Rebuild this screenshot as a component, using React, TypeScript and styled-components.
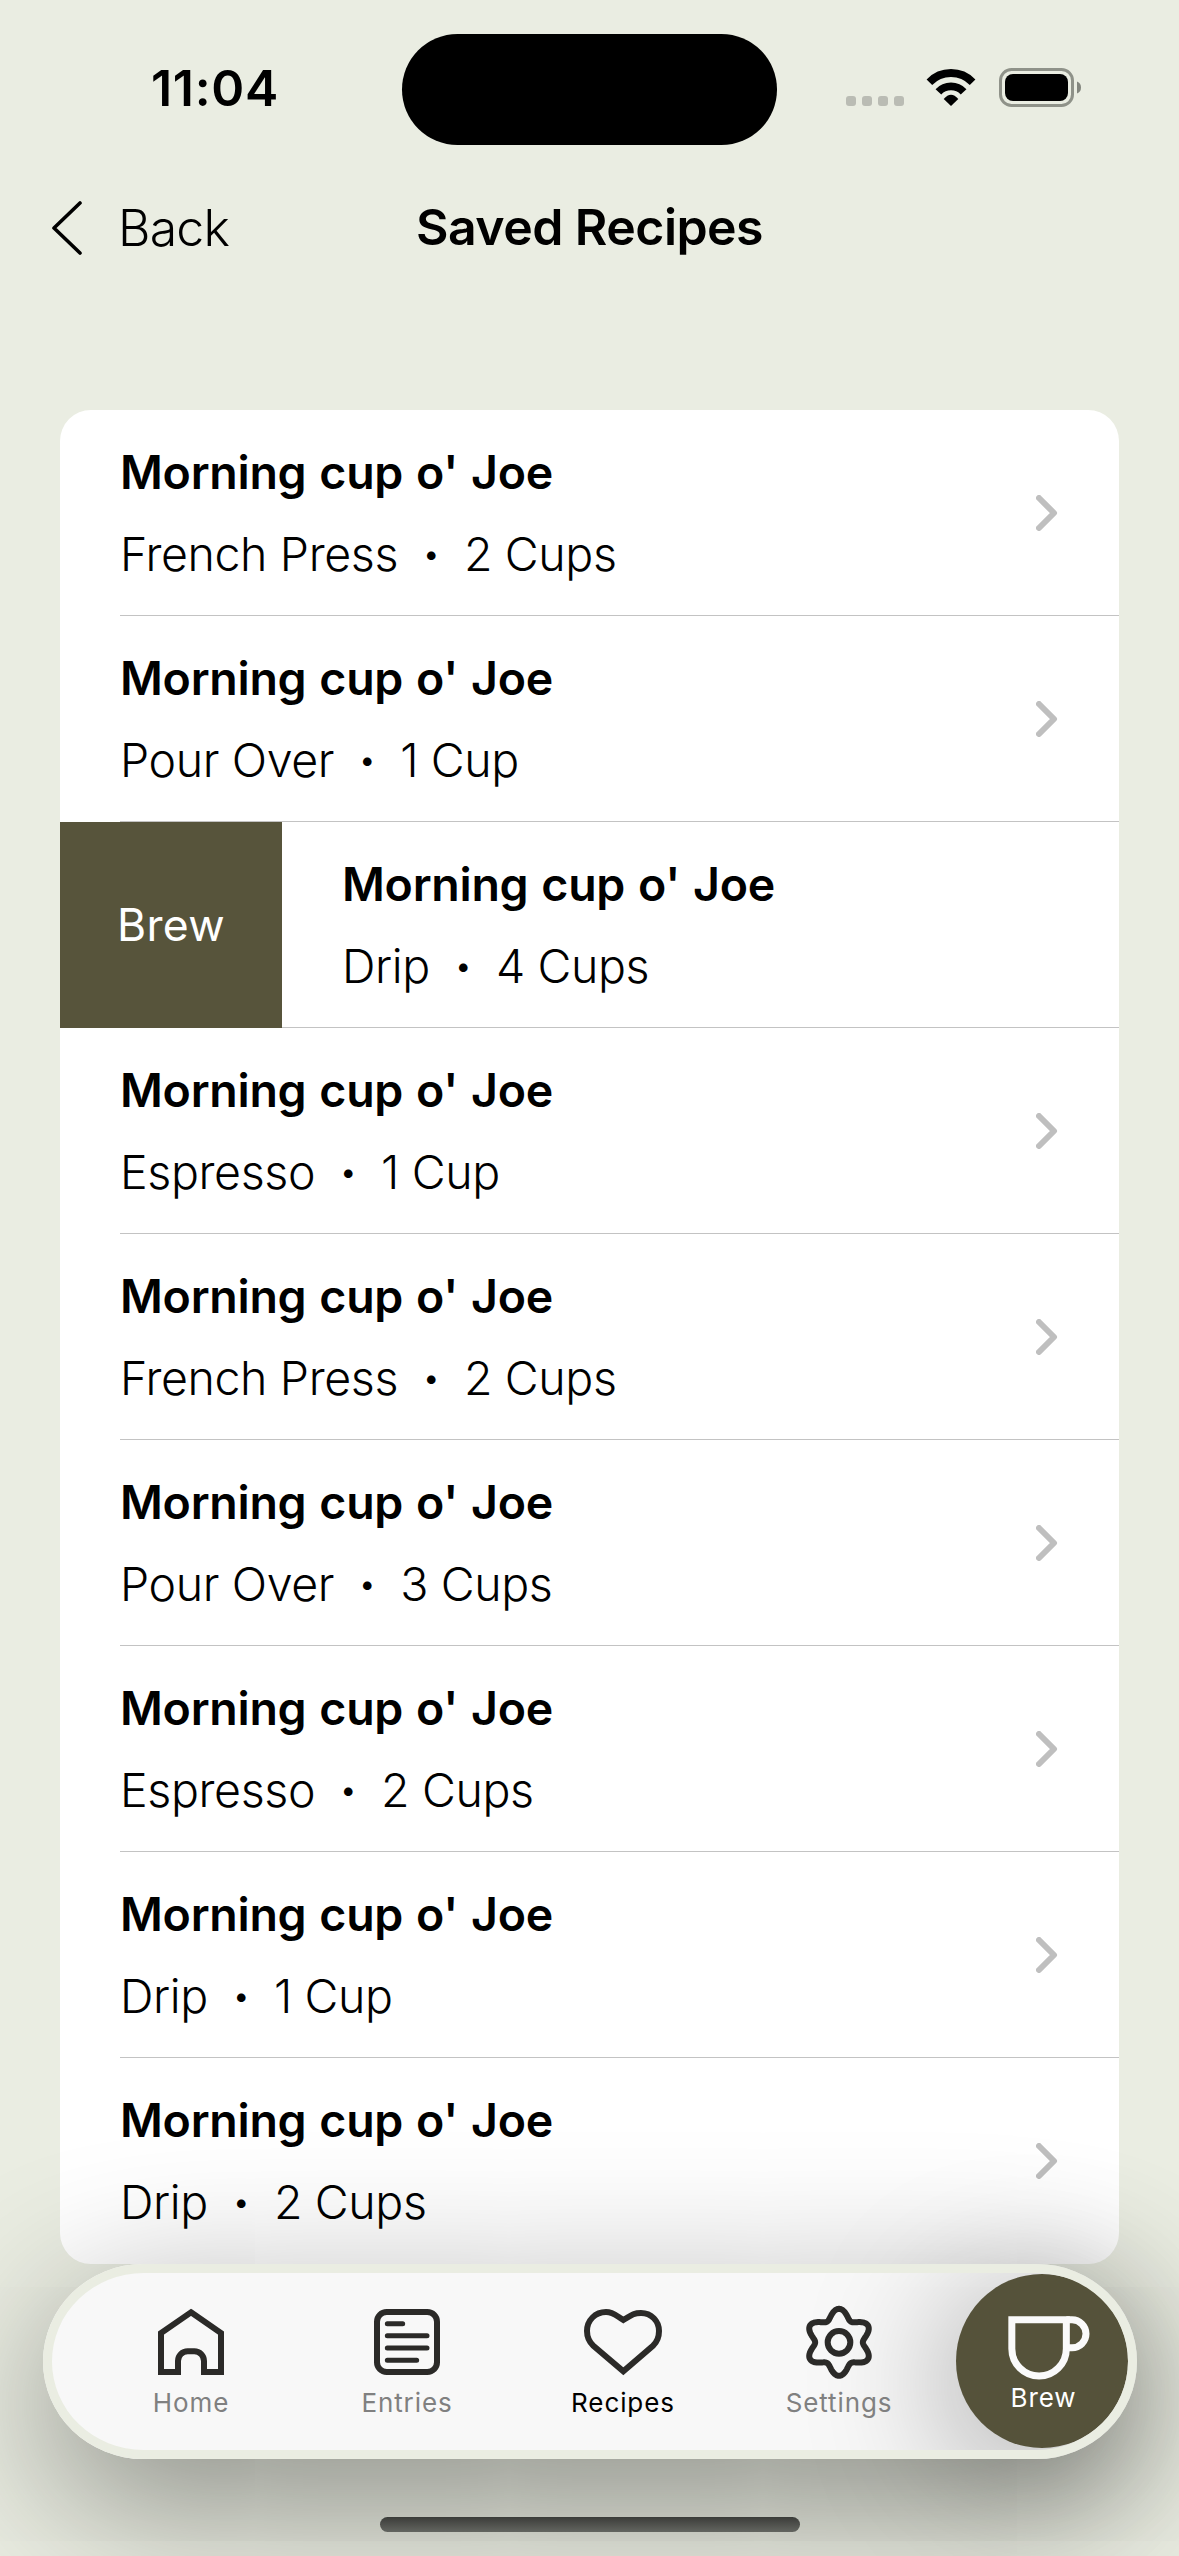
import React from "react";
import styled, { createGlobalStyle } from "styled-components";

const GlobalStyle = createGlobalStyle`
  * { box-sizing: border-box; }
  html, body { margin: 0; padding: 0; }
  body { background: #eaede2; font-family: Inter, "Liberation Sans", sans-serif; color: #000; }
`;

const Screen = styled.main`
  width: 1179px;
  height: 2556px;
  overflow: hidden;
  background: #eaede2;
  display: flex;
  flex-direction: column;
`;

const StatusBar = styled.header`
  height: 178px;
  flex: none;
  display: grid;
  grid-template-columns: 402px 375px 1fr;
  align-items: start;
`;

const Clock = styled.time`
  margin-top: 60px;
  padding-left: 28px;
  text-align: center;
  font-size: 50px;
  line-height: 56px;
  font-weight: 600;
  letter-spacing: 0.7px;
`;

const Island = styled.div`
  margin-top: 33.5px;
  height: 111px;
  border-radius: 56px;
  background: #000;
`;

const StatusIcons = styled.div`
  display: flex;
  align-items: flex-end;
  padding-left: 69px;
  margin-top: 68px;
  height: 39px;
`;

const CellDots = styled.div`
  display: flex;
  gap: 6px;
  padding-bottom: 1px;
  margin-right: 22px;
`;

const CellDot = styled.i`
  width: 10px;
  height: 10px;
  border-radius: 3px;
  background: #babcb4;
`;

const StatusGlyph = styled.svg<{ $gap?: number }>`
  display: block;
  flex: none;
  margin-right: ${(p) => p.$gap ?? 0}px;
`;

const NavBar = styled.nav`
  height: 100px;
  flex: none;
  display: grid;
  grid-template-columns: 360px 459px 360px;
  align-items: center;
`;

const BackButton = styled.a`
  display: flex;
  align-items: center;
  padding-left: 51px;
  gap: 35px;
  font-size: 50px;
  line-height: 60px;
  font-weight: 300;
  letter-spacing: -0.8px;
`;

const Title = styled.h1`
  margin: 0 0 2px;
  text-align: center;
  font-size: 50px;
  line-height: 60px;
  font-weight: 600;
  letter-spacing: -0.55px;
`;

const RecipeList = styled.ul`
  list-style: none;
  margin: 132px 60px 0;
  padding: 0;
  flex: none;
  background: #fff;
  border-radius: 31px;
  overflow: hidden;
`;

const RecipeRow = styled.li`
  height: 206px;
  display: flex;
  overflow: hidden;
`;

const SwipeAction = styled.button`
  width: 222px;
  flex: none;
  border: 0;
  padding: 0;
  background: #57543b;
  color: #fff;
  font: 400 44.5px/60px Inter, "Liberation Sans", sans-serif;
  letter-spacing: 0.3px;
`;

const RowBody = styled.div<{ $swiped: boolean; $last: boolean }>`
  flex: none;
  width: ${(p) => (p.$swiped ? 1059 : 999)}px;
  margin-left: ${(p) => (p.$swiped ? 0 : 60)}px;
  padding: 0 61px 0 ${(p) => (p.$swiped ? 60 : 0)}px;
  border-bottom: 1px solid ${(p) => (p.$last ? "transparent" : "#c3c3c3")};
  display: flex;
  align-items: center;
  justify-content: space-between;
`;

const RowText = styled.div`
  display: flex;
  flex-direction: column;
  gap: 22px;
`;

const RecipeName = styled.h2`
  margin: 0;
  font-size: 46.5px;
  line-height: 60px;
  font-weight: 600;
  letter-spacing: -0.27px;
  word-spacing: 1.5px;
`;

const RecipeMeta = styled.p`
  margin: 0;
  display: flex;
  font-size: 46.5px;
  line-height: 60px;
  font-weight: 300;
  letter-spacing: -0.38px;
`;

const Bullet = styled.span`
  width: 66px;
  text-align: center;
  font-size: 32px;
`;

const TabBar = styled.nav`
  position: relative;
  flex: none;
  margin: 0 42px 0 43px;
  width: 1094px;
  height: 195px;
  padding: 9px;
  border-radius: 101px / 98px;
  background: #f8f8f8;
  box-shadow: 0 44px 160px rgba(0, 0, 0, 0.43);
  display: flex;
`;

/* The rim sits above the shadow that the round Brew button casts. */
const TabBarRim = styled.span`
  position: absolute;
  inset: 0;
  border: 9px solid #eaede2;
  border-radius: 101px / 98px;
  pointer-events: none;
`;

const Tabs = styled.div`
  display: grid;
  grid-template-columns: repeat(4, 216px);
  padding-left: 31px;
  width: 904px;
`;

const Tab = styled.a<{ $active?: boolean }>`
  position: relative;
  z-index: 1;
  display: flex;
  flex-direction: column;
  align-items: center;
  padding-top: 32px;
  font-size: 26px;
  line-height: 34px;
  letter-spacing: 0.9px;
  color: ${(p) => (p.$active ? "#000" : "#808080")};
  gap: 7px;
`;

const TabIcon = styled.svg`
  display: block;
  height: 74px;
  fill: none;
  stroke: #2b2a28;
  stroke-width: 18;
`;

const BrewButton = styled.button`
  width: 172px;
  height: 174px;
  margin: 1px 0 0;
  padding: 42px 0 0;
  border: 0;
  border-radius: 50%;
  background: #55523a;
  color: #fff;
  box-shadow: -8px 22px 140px rgba(0, 0, 0, 0.36);
  display: flex;
  flex-direction: column;
  align-items: center;
  gap: 1px;
  font: 400 26px/34px Inter, "Liberation Sans", sans-serif;
  letter-spacing: 0.9px;
`;

const BrewLabel = styled.span`
  padding-left: 3px;
`;

const CupGlyph = styled.svg`
  display: block;
  flex: none;
  margin-left: 13px;
`;

const HomeIndicator = styled.div`
  position: relative;
  flex: none;
  width: 420px;
  height: 15px;
  margin: 58px auto 0 380px;
  border-radius: 8px;
  background: linear-gradient(#3b3c39, #636560);
`;

const WifiIcon = () => (
  <StatusGlyph width="50" height="38" viewBox="0 0 50 38" $gap={23}>
    <path d="M3.4 13.2A30 30 0 0 1 46.6 13.2M12.4 22.9A17.3 17.3 0 0 1 37.6 22.9" fill="none" stroke="#000" strokeWidth="7.8" />
    <path d="M25 37L17.7 30Q25 21.5 32.3 30Z" />
  </StatusGlyph>
);

const BatteryIcon = () => (
  <StatusGlyph width="83" height="39" viewBox="0 0 83 39">
    <rect x="1.5" y="1.5" width="72" height="36" rx="11" fill="none" stroke="#8f9289" strokeWidth="3" />
    <rect x="6" y="6" width="63" height="27" rx="8" />
    <path d="M78 13.5q4 1.5 4 6t-4 6z" fill="#83867e" />
  </StatusGlyph>
);

const HomeIcon = () => (
  <TabIcon width="74" viewBox="462 225 222 222">
    <path d="M573 247L663 309V426H612V393a29 29 0 0 0-29-29h-20a29 29 0 0 0-29 29V426H483V309Z" />
  </TabIcon>
);

const EntriesIcon = () => (
  <TabIcon width="74" viewBox="120 225 222 222">
    <rect x="141" y="246" width="180" height="180" rx="29" />
    <path d="M172 281H218M172 317.5H291M172 354H291M172 390.5H260" strokeWidth="15" strokeLinecap="round" />
  </TabIcon>
);

const HeartIcon = () => (
  <TabIcon width="84" viewBox="753 225 252 222">
    <path d="M880 270C902 257 909 249 933 249C964 249 987 273 987 303C987 321 981 336 969 347L880 424L790 347C778 336 771 321 771 303C771 271 796 246 828 246C851 246 858 257 880 270Z" />
  </TabIcon>
);

/* A closed six-lobed outline, drawn as a smooth polar wave. */
const gearPath =
  Array.from({ length: 180 }, (_, i) => {
    const t = (i / 180) * Math.PI * 2;
    const r = 86 + 14.5 * Math.cos(6 * t);
    return `${i ? "L" : "M"}${(r * Math.sin(t)).toFixed(2)} ${(-r * Math.cos(t)).toFixed(2)}`;
  }).join("") + "Z";

const GearIcon = () => (
  <TabIcon width="74" viewBox="-111 -112 222 222">
    <path d={gearPath} strokeLinejoin="round" />
    <circle r="34" />
  </TabIcon>
);

const CupIcon = () => (
  <CupGlyph width="82" height="64" viewBox="923 257 246 192" fill="none" stroke="#fafafa" strokeWidth="21">
    <path d="M934.5 268.5H1098V355a81.75 81.75 0 0 1-163.5 0Z" />
    <path d="M1098 268.5H1115a42 42 0 0 1 0 84H1098" />
  </CupGlyph>
);

type Recipe = { method: string; amount: string; swiped?: boolean };

const recipes: Recipe[] = [
  { method: "French Press", amount: "2 Cups" },
  { method: "Pour Over", amount: "1 Cup" },
  { method: "Drip", amount: "4 Cups", swiped: true },
  { method: "Espresso", amount: "1 Cup" },
  { method: "French Press", amount: "2 Cups" },
  { method: "Pour Over", amount: "3 Cups" },
  { method: "Espresso", amount: "2 Cups" },
  { method: "Drip", amount: "1 Cup" },
  { method: "Drip", amount: "2 Cups" },
];

export default function App() {
  return (
    <Screen>
      <GlobalStyle />
      <StatusBar>
        <Clock>11:04</Clock>
        <Island />
        <StatusIcons>
          <CellDots>
            <CellDot />
            <CellDot />
            <CellDot />
            <CellDot />
          </CellDots>
          <WifiIcon />
          <BatteryIcon />
        </StatusIcons>
      </StatusBar>
      <NavBar>
        <BackButton>
          <svg width="32" height="54" viewBox="0 0 32 54" fill="none" stroke="#000" strokeWidth="3.6" strokeLinecap="round" strokeLinejoin="round">
            <path d="M29 2L3 27L29 52" />
          </svg>
          Back
        </BackButton>
        <Title>Saved Recipes</Title>
      </NavBar>
      <RecipeList>
        {recipes.map((r, i) => (
          <RecipeRow key={i}>
            {r.swiped && <SwipeAction>Brew</SwipeAction>}
            <RowBody $swiped={!!r.swiped} $last={i === recipes.length - 1}>
              <RowText>
                <RecipeName>Morning cup o' Joe</RecipeName>
                <RecipeMeta>
                  {r.method}
                  <Bullet>•</Bullet>
                  {r.amount}
                </RecipeMeta>
              </RowText>
              <svg width="22" height="36" viewBox="0 0 22 36" fill="none" stroke="#bfbfbf" strokeWidth="6" strokeLinecap="round" strokeLinejoin="round">
                <path d="M3 3L18 18L3 33" />
              </svg>
            </RowBody>
          </RecipeRow>
        ))}
      </RecipeList>
      <TabBar>
        <Tabs>
          <Tab><HomeIcon />Home</Tab>
          <Tab><EntriesIcon />Entries</Tab>
          <Tab $active><HeartIcon />Recipes</Tab>
          <Tab><GearIcon />Settings</Tab>
        </Tabs>
        <BrewButton>
          <CupIcon />
          <BrewLabel>Brew</BrewLabel>
        </BrewButton>
        <TabBarRim />
      </TabBar>
      <HomeIndicator />
    </Screen>
  );
}
